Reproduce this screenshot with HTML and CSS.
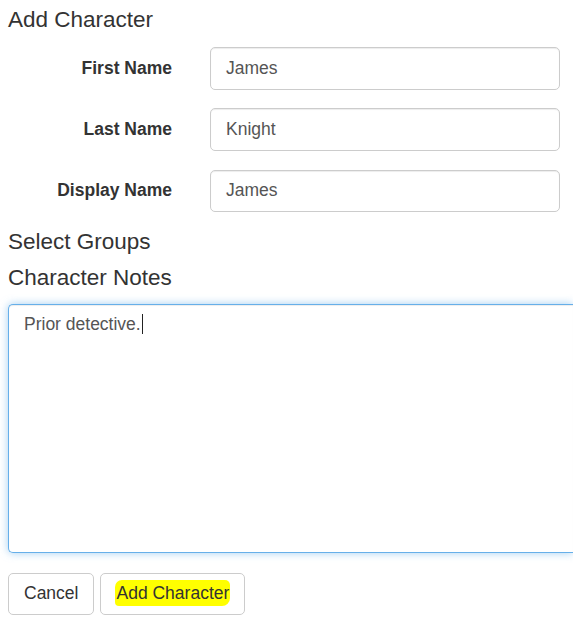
FILE: index.html
```html
<!DOCTYPE html>
<html lang="en">
<head>
<meta charset="utf-8">
<title>Add Character</title>
<link rel="stylesheet" href="styles.css">
</head>
<body>
<div class="page">
  <h4 class="heading heading-first">Add Character</h4>
  <form class="form-grid">
    <label class="control-label" for="first">First Name</label>
    <div class="form-control"><span>James</span></div>
    <label class="control-label" for="last">Last Name</label>
    <div class="form-control"><span>Knight</span></div>
    <label class="control-label" for="display">Display Name</label>
    <div class="form-control"><span>James</span></div>
  </form>
  <h4 class="heading heading-groups">Select Groups</h4>
  <h4 class="heading heading-notes">Character Notes</h4>
  <div class="textarea">Prior detective.<span class="caret"></span></div>
  <div class="actions">
    <button class="btn" type="button">Cancel</button>
    <button class="btn" type="button"><span class="highlight">Add Character</span></button>
  </div>
</div>
</body>
</html>
```

FILE: styles.css
```css
html, body {
  margin: 0;
  padding: 0;
  background: #fff;
  overflow: hidden;
}
body {
  font-family: "Liberation Sans", Arial, Helvetica, sans-serif;
  font-size: 17.5px;
  line-height: 1.42857;
  color: #333;
}
.page {
  padding: 8px 0 0 8px;
  display: flex;
  flex-direction: column;
  align-items: stretch;
}
.heading {
  margin: 0;
  font-size: 22.5px;
  font-weight: 500;
  line-height: 24.75px;
  color: #333;
}
.heading-first { margin-bottom: 14.3px; }
.heading-groups { margin-top: 17.5px; }
.heading-notes { margin-top: 11.3px; margin-bottom: 13.3px; }
.form-grid {
  display: grid;
  grid-template-columns: 164px 349.5px;
  column-gap: 38px;
  row-gap: 18.75px;
  margin: 0;
}
.control-label {
  font-weight: 700;
  text-align: right;
  align-self: center;
  line-height: 25px;
}
.form-control {
  box-sizing: border-box;
  height: 42.5px;
  padding: 7.5px 15px;
  border: 1px solid #ccc;
  border-radius: 5px;
  box-shadow: inset 0 1px 1px rgba(0,0,0,.075);
  color: #555;
  line-height: 25px;
  background: #fff;
}
.textarea {
  box-sizing: border-box;
  height: 249px;
  padding: 7.5px 15px;
  border: 1px solid #66afe9;
  border-right: none;
  border-radius: 5px 0 0 5px;
  box-shadow: inset 0 1px 1px rgba(0,0,0,.075), 0 0 8px rgba(102,175,233,.6);
  color: #555;
  line-height: 25px;
  background: #fff;
}
.caret {
  display: inline-block;
  width: 0;
  height: 20px;
  border-left: 1px solid #222;
  vertical-align: -4px;
  margin-left: 1px;
}
.actions {
  display: flex;
  gap: 6px;
  margin-top: 20px;
}
.btn {
  box-sizing: border-box;
  height: 42.5px;
  padding: 7.5px 15px;
  border: 1px solid #ccc;
  border-radius: 5px;
  background: #fff;
  color: #333;
  font-family: inherit;
  font-size: 17.5px;
  line-height: 25px;
  cursor: pointer;
}
.highlight {
  background: #ffff00;
  border-radius: 7px 5px 8px 4px;
  padding: 3px 1px 3px 1px;
  margin: 0 -1px;
}
```
